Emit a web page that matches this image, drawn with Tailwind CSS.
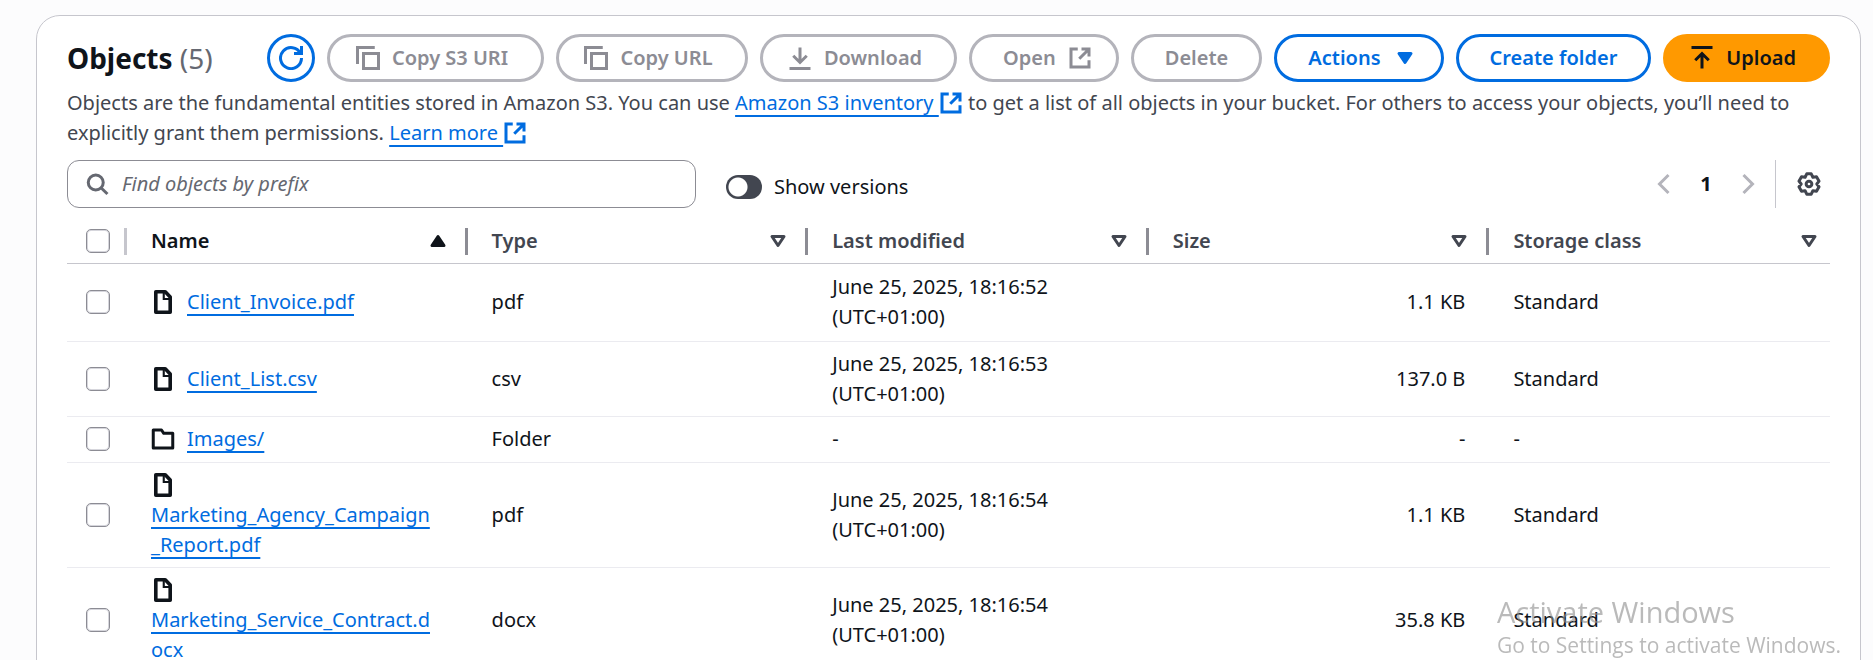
<!DOCTYPE html>
<html lang="en">
<head>
<meta charset="utf-8">
<title>Objects</title>
<script src="https://cdn.jsdelivr.net/npm/@tailwindcss/browser@4"></script>
</head>
<body class="h-screen overflow-hidden bg-[#fcfcfd] font-['Noto_Sans',sans-serif] text-[20px] leading-[30px] text-[#0f141a]">
<svg class="hidden">
  <symbol id="copy" viewBox="0 0 16 16"><path d="M1 12V1h11.5M5 5h10v10H5z" fill="none" stroke="currentColor" stroke-width="2"/></symbol>
  <symbol id="external" viewBox="0 0 16 16"><path d="M14 9.500V14H2V2h4.500M9 2h5v5M13.700 2.300 7.500 8.500" fill="none" stroke="currentColor" stroke-width="2"/></symbol>
  <symbol id="file" viewBox="0 0 16 16"><path d="M3.200 1.200H9.500l3.300 3.500v10.100H3.200z" fill="none" stroke="currentColor" stroke-width="2.400" stroke-linejoin="round"/><path d="M8.500 1v5h4.500" fill="none" stroke="currentColor" stroke-width="1.400"/></symbol>
  <symbol id="folder" viewBox="0 0 16 16"><path d="M1.500 14V2H7l1.500 2.200h6V14z" fill="none" stroke="currentColor" stroke-width="2" stroke-linejoin="round"/></symbol>
  <symbol id="down" viewBox="0 0 16 16"><path d="M4 5h8l-4 6z" fill="none" stroke="currentColor" stroke-width="2" stroke-linejoin="round"/></symbol>
  <symbol id="down-solid" viewBox="0 0 16 16"><path d="M4 5h8l-4 6z" fill="currentColor" stroke="currentColor" stroke-width="2" stroke-linejoin="round"/></symbol>
  <symbol id="up-solid" viewBox="0 0 16 16"><path d="M4 11h8L8 5z" fill="currentColor" stroke="currentColor" stroke-width="2" stroke-linejoin="round"/></symbol>
</svg>

<main class="mt-[15px] mr-3 ml-9 rounded-3xl border border-[#c6c6cd] bg-white px-[30px] pt-[18px] pb-8">
  <header class="flex items-center justify-between">
    <h1 class="text-[28px] leading-9 font-bold">Objects <span class="font-normal text-[#656871]">(5)</span></h1>
    <div class="flex gap-3 font-semibold">
      <button aria-label="Refresh" class="flex size-12 items-center justify-center rounded-full border-3 border-[#006ce0] text-[#006ce0]">
        <svg class="size-6" viewBox="0 0 16 16" fill="none" stroke="currentColor" stroke-width="2"><path d="M10 5h5V0M15 8a7 7 0 1 1-.7-3"/></svg>
      </button>
      <button disabled class="flex h-12 min-w-[217px] items-center justify-center gap-3 rounded-full border-3 border-[#b4b4bb] pr-[31px] pl-6 text-[#8c8c94]"><svg class="size-6"><use href="#copy"/></svg>Copy S3 URI</button>
      <button disabled class="flex h-12 min-w-[192px] items-center justify-center gap-3 rounded-full border-3 border-[#b4b4bb] pr-[31px] pl-6 text-[#8c8c94]"><svg class="size-6"><use href="#copy"/></svg>Copy URL</button>
      <button disabled class="flex h-12 min-w-[197px] items-center justify-center gap-3 rounded-full border-3 border-[#b4b4bb] pr-[31px] pl-6 text-[#8c8c94]"><svg class="size-6" viewBox="0 0 16 16" fill="none" stroke="currentColor" stroke-width="2"><path d="M8 1v10M3.500 6.500 8 11l4.500-4.500M1 15h14"/></svg>Download</button>
      <button disabled class="flex h-12 items-center gap-3 rounded-full border-3 border-[#b4b4bb] pr-6 pl-[31px] text-[#8c8c94]">Open<svg class="size-6"><use href="#external"/></svg></button>
      <button disabled class="flex h-12 items-center rounded-full border-3 border-[#b4b4bb] px-[31px] text-[#8c8c94]">Delete</button>
      <button class="flex h-12 items-center gap-3 rounded-full border-3 border-[#006ce0] pr-6 pl-[31px] text-[#006ce0]">Actions<svg class="size-6"><use href="#down-solid"/></svg></button>
      <button class="flex h-12 items-center rounded-full border-3 border-[#006ce0] px-[31px] text-[#006ce0]">Create folder</button>
      <button class="flex h-12 items-center gap-3 rounded-full border-3 border-[#ff9900] bg-[#ff9900] pr-[31px] pl-6"><svg class="size-6" viewBox="0 0 16 16" fill="none" stroke="currentColor" stroke-width="2"><path d="M8 15V5M3.500 9.500 8 5l4.500 4.500M1 1h14"/></svg>Upload</button>
    </div>
  </header>

  <p class="mt-1.5 text-[#424650]">Objects are the fundamental entities stored in Amazon S3. You can use <a href="#inventory" class="text-[#006ce0] underline decoration-2 underline-offset-[5px] [text-decoration-skip-ink:none]">Amazon S3 inventory&nbsp;<svg class="inline size-6 align-[-5px]"><use href="#external"/></svg></a> to get a list of all objects in your bucket. For others to access your objects, you’ll need to explicitly grant them permissions. <a href="#learn" class="text-[#006ce0] underline decoration-2 underline-offset-[5px] [text-decoration-skip-ink:none]">Learn more&nbsp;<svg class="inline size-6 align-[-5px]"><use href="#external"/></svg></a></p>

  <div class="mt-3 flex items-center justify-between">
    <div class="flex items-center gap-[30px]">
      <label class="flex h-12 w-[629px] items-center gap-3 rounded-xl border border-[#8c8c94] px-[18px] text-[#656871]">
        <svg class="size-6 shrink-0" viewBox="0 0 16 16" fill="none" stroke="currentColor" stroke-width="2"><circle cx="6.500" cy="7" r="5"/><path d="m10 10.500 4.300 4.200"/></svg>
        <input type="text" aria-label="Find objects by prefix" placeholder="Find objects by prefix" class="w-full outline-none placeholder:text-[#656871] placeholder:italic">
      </label>
      <label class="flex items-center gap-3 pt-1.5">
        <input type="checkbox" role="switch" class="h-6 w-9 appearance-none rounded-full bg-[#424650] bg-[radial-gradient(circle_at_12px_12px,#fff_9px,transparent_10px)]">
        Show versions
      </label>
    </div>
    <div class="flex items-center">
      <nav aria-label="Pagination" class="flex items-center text-[#b4b4bb]">
        <button disabled aria-label="Previous page" class="px-1.5"><svg class="size-6" viewBox="0 0 16 16" fill="none" stroke="currentColor" stroke-width="2"><path d="M11 2 5 8l6 6"/></svg></button>
        <button aria-current="page" class="w-12 text-center font-bold text-[#0f141a]">1</button>
        <button disabled aria-label="Next page" class="px-1.5"><svg class="size-6" viewBox="0 0 16 16" fill="none" stroke="currentColor" stroke-width="2"><path d="m5 2 6 6-6 6"/></svg></button>
      </nav>
      <button aria-label="Preferences" class="ml-[9px] flex h-12 items-center border-l border-[#c6c6cd] pr-[9px] pl-[21px] text-[#424650]"><svg class="size-6" viewBox="0 0 16 16" fill="none" stroke="currentColor" stroke-width="2" stroke-linejoin="round"><path d="M6.500 1.200h3l1.100 2.300 2.400-.4 1.700 3L13.200 8l1.500 1.900-1.700 3-2.400-.4-1.100 2.300h-3l-1.100-2.300-2.400.4-1.700-3L2.800 8 1.300 6.100l1.700-3 2.400.4z"/><circle cx="8" cy="8" r="1.900"/></svg></button>
    </div>
  </div>

  <table class="mt-3 w-full table-fixed border-collapse text-left">
    <colgroup><col class="w-[60px]"><col class="w-[20%]"><col class="w-[20%]"><col class="w-[20%]"><col class="w-[20%]"><col class="w-[20%]"></colgroup>
    <thead class="text-[#424650]">
      <tr class="h-[43px] border-b border-[#c6c6cd]">
        <th class="p-0"><div class="flex items-center justify-between pl-[19px]"><input type="checkbox" aria-label="Select all" class="size-6 appearance-none rounded-[5px] border border-[#8c8c94] shadow-[inset_0_0_0_1px_#d6d6dc]"><span class="h-[27px] w-[3px] bg-[#c6c6cd]"></span></div></th>
        <th class="p-0 font-semibold"><div class="flex items-center pl-6 text-[#0f141a]">Name<svg class="mr-[15px] ml-auto size-6"><use href="#up-solid"/></svg><span class="h-[27px] w-[3px] bg-[#8c8c94]"></span></div></th>
        <th class="p-0 font-semibold"><div class="flex items-center pl-6">Type<svg class="mr-[15px] ml-auto size-6"><use href="#down"/></svg><span class="h-[27px] w-[3px] bg-[#8c8c94]"></span></div></th>
        <th class="p-0 font-semibold"><div class="flex items-center pl-6">Last modified<svg class="mr-[15px] ml-auto size-6"><use href="#down"/></svg><span class="h-[27px] w-[3px] bg-[#8c8c94]"></span></div></th>
        <th class="p-0 font-semibold"><div class="flex items-center pl-6">Size<svg class="mr-[15px] ml-auto size-6"><use href="#down"/></svg><span class="h-[27px] w-[3px] bg-[#8c8c94]"></span></div></th>
        <th class="p-0 font-semibold"><div class="flex items-center pl-6">Storage class<svg class="mr-[9px] ml-auto size-6"><use href="#down"/></svg></div></th>
      </tr>
    </thead>
    <tbody class="[&_a]:text-[#006ce0] [&_a]:underline [&_a]:decoration-2 [&_a]:underline-offset-[5px] [&_a]:[text-decoration-skip-ink:none] [&_input]:block [&_input]:size-6 [&_input]:appearance-none [&_input]:rounded-[5px] [&_input]:border [&_input]:border-[#8c8c94] [&_input]:shadow-[inset_0_0_0_1px_#d6d6dc] [&_td]:px-6 [&_td]:py-0 [&_td:first-child]:pr-0 [&_td:first-child]:pl-[19px] [&_tr]:border-b [&_tr]:border-[#ebebf0]">
      <tr class="h-[78px]"><td><input type="checkbox" aria-label="Select Client_Invoice.pdf"></td><td><div class="flex items-center gap-3"><svg class="size-6"><use href="#file"/></svg><a href="#f1">Client_Invoice.pdf</a></div></td><td>pdf</td><td>June 25, 2025, 18:16:52<br>(UTC+01:00)</td><td class="text-right">1.1 KB</td><td>Standard</td></tr>
      <tr class="h-[75px]"><td><input type="checkbox" aria-label="Select Client_List.csv"></td><td><div class="flex items-center gap-3"><svg class="size-6"><use href="#file"/></svg><a href="#f2">Client_List.csv</a></div></td><td>csv</td><td>June 25, 2025, 18:16:53<br>(UTC+01:00)</td><td class="text-right">137.0 B</td><td>Standard</td></tr>
      <tr class="h-[46px]"><td><input type="checkbox" aria-label="Select Images/"></td><td><div class="flex items-center gap-3"><svg class="size-6"><use href="#folder"/></svg><a href="#f3">Images/</a></div></td><td>Folder</td><td>-</td><td class="text-right">-</td><td>-</td></tr>
      <tr class="h-[105px]"><td><input type="checkbox" aria-label="Select Marketing_Agency_Campaign_Report.pdf"></td><td><svg class="my-[3px] size-6"><use href="#file"/></svg><a href="#f4">Marketing_Agency_Campaign<wbr>_Report.pdf</a></td><td>pdf</td><td>June 25, 2025, 18:16:54<br>(UTC+01:00)</td><td class="text-right">1.1 KB</td><td>Standard</td></tr>
      <tr class="h-[105px]"><td><input type="checkbox" aria-label="Select Marketing_Service_Contract.docx"></td><td><svg class="my-[3px] size-6"><use href="#file"/></svg><a href="#f5">Marketing_Service_Contract.d<wbr>ocx</a></td><td>docx</td><td>June 25, 2025, 18:16:54<br>(UTC+01:00)</td><td class="text-right">35.8 KB</td><td>Standard</td></tr>
    </tbody>
  </table>
</main>

<aside class="pointer-events-none fixed right-8 bottom-0 font-['Open_Sans',sans-serif] text-[#8c8c8c]/60">
  <p class="text-[29px] leading-9">Activate Windows</p>
  <p class="text-[21px] leading-[30px]">Go to Settings to activate Windows.</p>
</aside>
</body>
</html>
